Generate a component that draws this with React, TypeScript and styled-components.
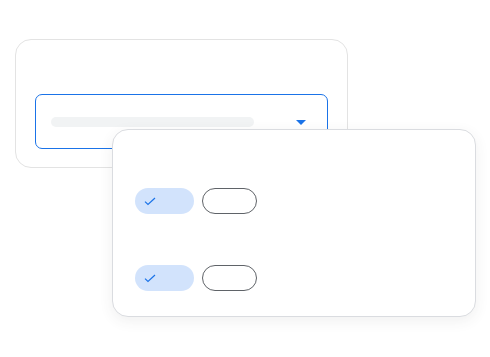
import styled, { createGlobalStyle } from 'styled-components'

const GlobalStyle = createGlobalStyle`
  html, body {
    margin: 0;
    padding: 0;
    background: #ffffff;
    font-family: Roboto, "Liberation Sans", sans-serif;
  }
  * { box-sizing: border-box; }
`

//#region
const Stage = styled.div`
  position: relative;
  width: 490px;
  height: 357px;
  padding: 39px 0 0 15px;
  overflow: hidden;
`
const BackCard = styled.div`
  width: 333px;
  height: 129px;
  border: 1px solid #e3e3e3;
  border-radius: 16px;
  background: #ffffff;
  padding: 54px 0 0 19px;
`
const SelectBox = styled.div`
  width: 293px;
  height: 55px;
  border: 1px solid #1a73e8;
  border-radius: 7px;
  display: flex;
  align-items: center;
  justify-content: space-between;
  padding: 0 21px 0 15px;
`
const Skeleton = styled.div`
  width: 203px;
  height: 10px;
  border-radius: 5px;
  background: #f1f3f4;
`
const Caret = styled.div`
  width: 0;
  height: 0;
  border-left: 5px solid transparent;
  border-right: 5px solid transparent;
  border-top: 5px solid #1a73e8;
  margin-top: 2px;
`
const Menu = styled.div`
  position: absolute;
  left: 112px;
  top: 129px;
  width: 364px;
  height: 188px;
  border: 1px solid #dadce0;
  border-radius: 16px;
  background: #ffffff;
  box-shadow: 0 4px 14px rgba(60, 64, 67, 0.08);
  padding: 58px 0 0 22px;
  display: flex;
  flex-direction: column;
  gap: 51px;
`
const ChipRow = styled.div`
  display: flex;
  gap: 8px;
`
const Chip = styled.div<{ $selected?: boolean }>`
  height: 26px;
  width: ${p => (p.$selected ? 59 : 55)}px;
  border-radius: 13px;
  background: ${p => (p.$selected ? '#d2e3fc' : '#ffffff')};
  border: ${p => (p.$selected ? 'none' : '1px solid #5f6368')};
  display: flex;
  align-items: center;
  padding-left: 9px;
`
//#endregion

const Check = () => (
  <svg width="12" height="9" viewBox="0 0 12 9" fill="none">
    <path d="M1 4.6 L4 7.4 L11 1" stroke="#1a73e8" strokeWidth="1.2" />
  </svg>
)

export default function App() {
  const rows = [0, 1]
  return (
    <>
      <GlobalStyle />
      <Stage>
        <BackCard>
          <SelectBox>
            <Skeleton />
            <Caret />
          </SelectBox>
        </BackCard>
        <Menu>
          {rows.map(r => (
            <ChipRow key={r}>
              <Chip $selected>
                <Check />
              </Chip>
              <Chip />
            </ChipRow>
          ))}
        </Menu>
      </Stage>
    </>
  )
}
